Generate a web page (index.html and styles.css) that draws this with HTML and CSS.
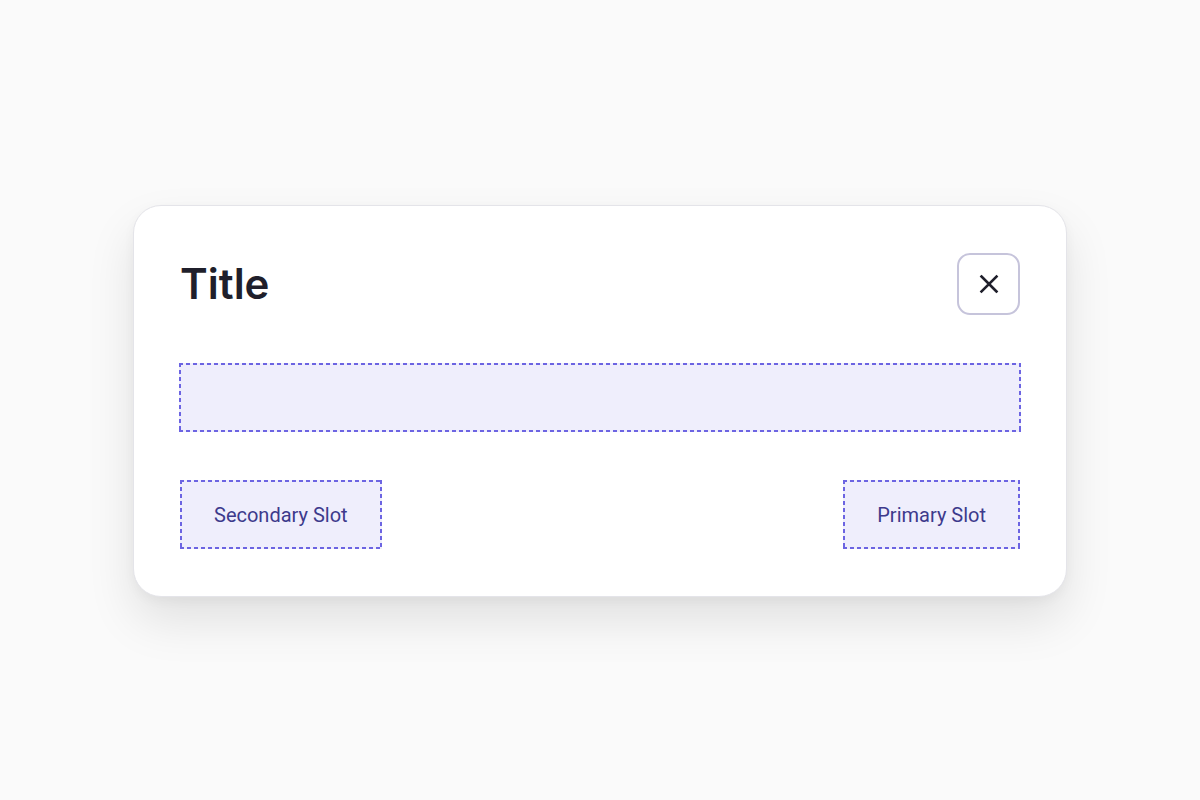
FILE: index.html
```html
<!DOCTYPE html>
<html lang="en">
<head>
<meta charset="utf-8">
<title>Dialog</title>
<link rel="stylesheet" href="styles.css">
</head>
<body>
<main class="stage">
  <section class="dialog">
    <header class="dialog-header">
      <h1 class="dialog-title">Title</h1>
      <button class="close-btn" aria-label="Close">
        <svg width="22" height="22" viewBox="0 0 22 22" fill="none" stroke="#1f1f2b" stroke-width="2.6" stroke-linecap="square">
          <path d="M3.5 3.5 L18.5 18.5 M18.5 3.5 L3.5 18.5"/>
        </svg>
      </button>
    </header>
    <div class="slot slot-content"></div>
    <footer class="dialog-footer">
      <div class="slot slot-btn">Secondary Slot</div>
      <div class="slot slot-btn">Primary Slot</div>
    </footer>
  </section>
</main>
</body>
</html>
```
FILE: styles.css
```css
html, body {
  margin: 0;
  padding: 0;
  height: 100%;
}
body {
  background: #fafafa;
  font-family: "Inter", "Roboto", sans-serif;
}
.stage {
  height: 800px;
  display: flex;
  align-items: center;
  justify-content: center;
}
.dialog {
  box-sizing: border-box;
  width: 934px;
  padding: 47px 45px 47px 45px;
  margin-top: 2px;
  background: #ffffff;
  border: 1px solid #e4e4e9;
  border-radius: 28px;
  box-shadow: 0 24px 48px rgba(0, 0, 0, 0.10), 0 4px 12px rgba(0, 0, 0, 0.04);
  display: flex;
  flex-direction: column;
  gap: 48px;
}
.dialog-header {
  display: flex;
  align-items: center;
  justify-content: space-between;
}
.dialog-title {
  margin: 0 0 0 1px;
  font-family: "Inter", sans-serif;
  font-weight: 600;
  font-size: 42px;
  line-height: 48px;
  color: #1f1f2b;
}
.close-btn {
  box-sizing: border-box;
  width: 63px;
  height: 62px;
  margin-right: 1px;
  border: 2.5px solid #c6c4db;
  border-radius: 13px;
  background: #ffffff;
  display: flex;
  align-items: center;
  justify-content: center;
  padding: 0;
}
.slot {
  box-sizing: border-box;
  background-color: #efeefc;
  background-image:
    repeating-linear-gradient(90deg, #6c64e2 0 4px, transparent 4px 7px),
    repeating-linear-gradient(90deg, #6c64e2 0 4px, transparent 4px 7px),
    repeating-linear-gradient(180deg, #6c64e2 0 4px, transparent 4px 7px),
    repeating-linear-gradient(180deg, #6c64e2 0 4px, transparent 4px 7px);
  background-size: 100% 2px, 100% 2px, 2px 100%, 2px 100%;
  background-position: top left, bottom left, top left, top right;
  background-repeat: no-repeat;
}
.slot-content {
  height: 69px;
}
.dialog-footer {
  display: flex;
  justify-content: space-between;
  padding: 0 1px;
}
.slot-btn {
  height: 69px;
  padding: 0 34px;
  display: flex;
  align-items: center;
  font-family: "Roboto", sans-serif;
  font-size: 20px;
  color: #3d3a8c;
}
```
